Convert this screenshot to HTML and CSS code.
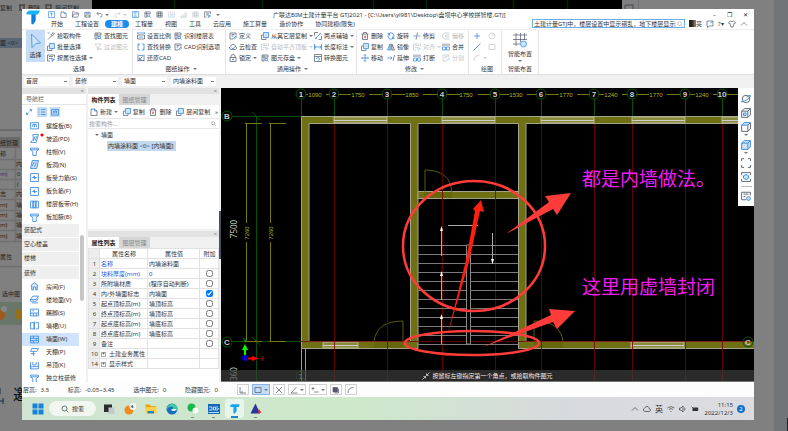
FILE: index.html
```
<!DOCTYPE html>
<html lang="zh-CN">
<head>
  <meta charset="UTF-8">
  <meta name="viewport" content="width=device-width, initial-scale=1">
  <title>广联达BIM土建计量平台 GTJ2021</title>
  <link rel="stylesheet" href="styles.css">
</head>
<body>

  <!-- icon set -->
  <svg class="defs" aria-hidden="true">
    <symbol id="new" viewBox="0 0 16 16"><path d="M2 5V15H14V6L9 2H5"/><path class="b" d="M9 2V6H14M1 3H5M3 1V5"/></symbol>
    <symbol id="plus" viewBox="0 0 16 16"><path class="b" d="M1 1H15V15H1ZM8 4V12M5 7L8 4L11 7"/></symbol>
    <symbol id="open" viewBox="0 0 16 16"><path d="M1 14V2H6L8 4H14V7M1 14L4 7H16L13 14Z"/></symbol>
    <symbol id="save" viewBox="0 0 16 16"><path d="M2 3H14V14H2ZM4 14V9H12V14"/><path class="b" d="M5 3V6H11V3"/></symbol>
    <symbol id="undo" viewBox="0 0 16 16"><path d="M5 2L2 6L6 9M2 6H10Q14 6 14 10T9 14"/></symbol>
    <symbol id="redo" viewBox="0 0 16 16"><path d="M11 2L14 6L10 9M14 6H6Q2 6 2 10T7 14"/></symbol>
    <symbol id="sum" viewBox="0 0 16 16"><path class="b" d="M1 1H15V15H1ZM11 4H5L9 8L5 12H11"/></symbol>
    <symbol id="find" viewBox="0 0 16 16"><path d="M6 14H2V2H14V7M2 6H14M6 2V14"/><path class="b" d="M8 9H13V13H8ZM13 13L15 15"/></symbol>
    <symbol id="grid" viewBox="0 0 16 16"><path d="M2 2H14V14H2ZM2 6H14M2 10H14M6 2V14M10 2V14"/></symbol>
    <symbol id="chart" viewBox="0 0 16 16"><path d="M1 14H15M3 14V10M7 14V7M11 14V4M14 14V2"/></symbol>
    <symbol id="pick" viewBox="0 0 16 16"><path d="M2 15L10 7M7 4L12 9M9 5L12 1L15 4L11 7"/><path class="b" d="M1 2H5"/></symbol>
    <symbol id="copy" viewBox="0 0 16 16"><path d="M4 6H1V15H10V12"/><path class="bf" d="M5 1H15V11H5Z"/></symbol>
    <symbol id="attr" viewBox="0 0 16 16"><path d="M15 7V2H1V14H6M4 5H12M4 9H7"/><path class="bf" d="M8 8L15 11L12 12L11 15Z"/></symbol>
    <symbol id="filter" viewBox="0 0 16 16"><path d="M2 2H14L9 8V14L6 12V8ZM11 10L15 14M15 10L11 14"/></symbol>
    <symbol id="scale" viewBox="0 0 16 16"><path d="M1 6H15V14H1Z"/><path class="b" d="M1 1V4M15 1V4M1 2H15M4 10H12"/></symbol>
    <symbol id="swap" viewBox="0 0 16 16"><path class="b" d="M6 2H2V14H6M10 2H14V14H10M4 5L2 2M12 11L14 14"/></symbol>
    <symbol id="restore" viewBox="0 0 16 16"><path d="M2 1V15M14 1V15M2 13H14"/><path class="b" d="M4 3H12M5 11L11 5M5 7V11H9"/></symbol>
    <symbol id="define" viewBox="0 0 16 16"><path d="M8 14H2V2H14V7M5 5H11M5 8H9"/><path class="b" d="M9 13L14 8L15 10L11 14Z"/></symbol>
    <symbol id="cloud" viewBox="0 0 16 16"><path d="M4 13Q0 12 1 8Q3 6 4 6Q6 1 10 3Q13 5 12 7Q16 8 15 11Q14 13 12 13Z"/></symbol>
    <symbol id="check" viewBox="0 0 16 16"><path d="M4 13Q0 12 1 8Q3 6 4 6Q6 1 10 3Q13 5 12 7Q16 8 15 11Q14 13 12 13Z"/><path class="b" d="M5 9L8 12L12 7"/></symbol>
    <symbol id="lock" viewBox="0 0 16 16"><path d="M4 7V4Q4 1 8 1T12 4V7M2 7H14V15H2Z"/><path class="b" d="M8 9V13M6 11H10"/></symbol>
    <symbol id="line" viewBox="0 0 16 16"><path class="b" d="M2 14L14 2M3 11L6 14M11 2L14 5"/><path d="M1 1V8M15 8V15H9M1 1H8"/></symbol>
    <symbol id="length" viewBox="0 0 16 16"><path class="b" d="M1 2V14M15 2V14M1 8H15M4 5L1 8L4 11M12 5L15 8L12 11"/></symbol>
    <symbol id="convert" viewBox="0 0 16 16"><path d="M1 1H15V15H1ZM1 5H15"/><path class="b" d="M5 10Q5 7 8 7T11 10T8 13"/></symbol>
    <symbol id="trash" viewBox="0 0 16 16"><path d="M1 4H15M5 4V1H11V4M3 4V15H13V4"/><path class="r" d="M6 7L10 12M10 7L6 12"/></symbol>
    <symbol id="rotate" viewBox="0 0 16 16"><path class="b" d="M4 3Q8 0 12 3Q16 8 12 13Q8 16 4 13Q0 8 4 3M1 3H5V7M15 13H11V9"/></symbol>
    <symbol id="trim" viewBox="0 0 16 16"><path class="b" d="M1 8H6M9 8H15"/><path d="M6 15L9 1"/></symbol>
    <symbol id="offset" viewBox="0 0 16 16"><path d="M15 2H6Q1 3 1 8T6 14H15M15 6H8Q5 8 8 10H15"/></symbol>
    <symbol id="mirror" viewBox="0 0 16 16"><path class="bf" d="M6 2V14H1Z"/><path d="M10 2V14H15ZM8 1V15"/></symbol>
    <symbol id="join" viewBox="0 0 16 16"><path d="M2 1V6M6 1V6M10 1V6M14 1V6"/><path class="b" d="M1 8H7V14H1ZM9 8H15V14H9Z"/></symbol>
    <symbol id="move" viewBox="0 0 16 16"><path class="b" d="M8 1V15M1 8H15M6 3L8 1L10 3M6 13L8 15L10 13M3 6L1 8L3 10M13 6L15 8L13 10"/></symbol>
    <symbol id="extend" viewBox="0 0 16 16"><path class="b" d="M1 8H10M7 5L10 8L7 11"/><path d="M12 14L15 2"/></symbol>
    <symbol id="cross" viewBox="0 0 16 16"><path class="b" d="M8 2V14M2 8H14"/></symbol>
    <symbol id="slash" viewBox="0 0 16 16"><path class="b" d="M3 13L13 3M1 15L4 12M12 4L15 1"/></symbol>
    <symbol id="expand" viewBox="0 0 16 16"><path class="b" d="M3 9V13H7M9 3H13V7M4 12L7 9M12 4L9 7"/></symbol>
    <symbol id="arc" viewBox="0 0 16 16"><path d="M2 14Q2 3 13 3"/></symbol>
    <symbol id="clock" viewBox="0 0 16 16"><circle cx="8" cy="8" r="6"/><path d="M8 8L12 5"/></symbol>
    <symbol id="rect" viewBox="0 0 16 16"><path d="M2 3H14V13H2Z"/></symbol>
    <symbol id="layout" viewBox="0 0 32 32"><path d="M2 6H30M2 15H30M2 24H16M8 2V28M17 2V20M25 2V16"/><circle class="bf" cx="23" cy="24" r="6"/></symbol>
    <symbol id="cursor" viewBox="0 0 24 32"><path class="bf" d="M3 2L21 20L12 21L4 29Z"/></symbol>
    <symbol id="search" viewBox="0 0 16 16"><circle cx="7" cy="7" r="5"/><path d="M11 11L15 15"/></symbol>
    <symbol id="box" viewBox="0 0 16 16"><path class="b" d="M1 3H15V14H1ZM5 11V6H11V11M8 6V11"/></symbol>
    <symbol id="ramp" viewBox="0 0 16 16"><path class="b" d="M5 1H15L11 15H1L6 9ZM9 4L6 12M12 4L9 12"/></symbol>
    <symbol id="cap" viewBox="0 0 16 16"><path class="b" d="M1 2H15V5L11 8V15H5V8L1 5ZM1 5H15"/></symbol>
    <symbol id="hole" viewBox="0 0 16 16"><path class="bf" d="M4 1H15L12 15H1ZM4 11L7 4M8 12L11 4"/></symbol>
    <symbol id="rebar" viewBox="0 0 16 16"><path class="b" d="M1 1H15V15H1ZM4 8H12M8 5V11M6 6L10 10"/></symbol>
    <symbol id="strip" viewBox="0 0 16 16"><path class="b" d="M1 2H15V14H1ZM5 2V14M11 2V14"/><path class="bf" d="M6 3H10V13H6Z"/></symbol>
    <symbol id="room" viewBox="0 0 16 16"><path class="bf" d="M1 7L8 1L15 7M3 6V14H6V9H10V14H13V6"/></symbol>
    <symbol id="floor" viewBox="0 0 16 16"><path class="b" d="M5 2H15L11 8H1ZM1 8V11H11L15 6M3 14H14"/></symbol>
    <symbol id="wall" viewBox="0 0 16 16"><path class="b" d="M1 2H15V14H1ZM1 6H15M1 10H15M6 2V6M11 6V10M6 10V14"/></symbol>
    <symbol id="skirt" viewBox="0 0 16 16"><path class="b" d="M1 2H15V14H1ZM1 9H15M6 9V14M11 9V14M4 5H7"/></symbol>
    <symbol id="dado" viewBox="0 0 16 16"><path class="b" d="M1 3H7V14H1ZM8 1V15M10 3H15V14H10"/></symbol>
    <symbol id="ceil" viewBox="0 0 16 16"><path class="b" d="M3 1H15L12 6H1ZM6 6V14M1 10H9"/></symbol>
    <symbol id="hang" viewBox="0 0 16 16"><path class="b" d="M1 2V14H15V2M1 14V10H15M5 2V7H11V2"/></symbol>
    <symbol id="orbit" viewBox="0 0 16 16"><circle cx="8" cy="8" r="6"/><path class="b" d="M1 11Q-1 14 6 11T15 4T9 5"/></symbol>
    <symbol id="cube" viewBox="0 0 16 16"><path d="M1 5L5 1H15V11L11 15H1ZM1 5H11V15M11 5L15 1"/></symbol>
    <symbol id="cube3d" viewBox="0 0 16 16"><path d="M1 5L5 1H15V11L11 15H1ZM1 5H11V15M11 5L15 1"/><path class="bf" d="M4 8H8V12H4Z"/></symbol>
    <symbol id="cubetop" viewBox="0 0 16 16"><path d="M1 5V15H11L15 11V1M11 5V15"/><path class="bf" d="M1 5L5 1H15L11 5Z"/></symbol>
    <symbol id="cubefill" viewBox="0 0 16 16"><path class="bf" d="M1 5L5 1H15V11L11 15H1ZM1 5H11V15M11 5L15 1"/></symbol>
    <symbol id="fit" viewBox="0 0 16 16"><path d="M1 5V1H5M11 1H15V5M15 11V15H11M5 15H1V11"/></symbol>
    <symbol id="eye" viewBox="0 0 16 16"><path d="M1 5V1H15V5M15 11V15H1V11"/><path class="bf" d="M4 6L8 4L12 6V10L8 12L4 10Z"/></symbol>
    <symbol id="note" viewBox="0 0 16 16"><path d="M8 14H1V2H15V7M4 5H12M4 9H7"/><circle class="bf" cx="12" cy="12" r="3"/></symbol>
    <symbol id="corner" viewBox="0 0 16 16"><path d="M2 2V14H14M6 10V14"/></symbol>
    <symbol id="xmark" viewBox="0 0 16 16"><path d="M2 2L14 14M14 2L2 14"/></symbol>
    <symbol id="angle" viewBox="0 0 16 16"><path d="M13 2L2 14H15"/></symbol>
    <symbol id="up" viewBox="0 0 16 16"><path d="M2 11L8 5L14 11"/></symbol>
    <symbol id="wifi" viewBox="0 0 16 16"><path d="M1 6Q8 0 15 6M4 9Q8 5 12 9M7 12L8 13L9 12"/></symbol>
    <symbol id="sound" viewBox="0 0 16 16"><path d="M1 6H4L8 2V14L4 10H1ZM11 5Q13 8 11 11"/></symbol>
    <symbol id="shirt" viewBox="0 0 16 16"><path d="M5 2L1 5L3 8L4 7L6 14H10L12 7L13 8L15 5L11 2Q8 5 5 2"/></symbol>
    <symbol id="chat" viewBox="0 0 16 16"><path d="M2 2H14V12H7L3 15V12H2Z"/><path class="b" d="M9 6L14 3"/></symbol>
  </svg>

  <!-- dimmed desktop behind the window -->
  <svg class="desktop" viewBox="0 0 788 431" preserveAspectRatio="xMinYMin slice" aria-hidden="true">
    <rect width="788" height="431" fill="#808080"/>
    <rect x="92" width="530" height="10" fill="#000"/>
    <path d="M174.500 0V9M262.500 0V9M373.500 0V9M426.500 0V9M513.500 0V9M567.500 0V9" stroke="#002800"/>
    <path d="M625 5H633V9M625 5V9" fill="none" stroke="#565a60"/>
    <rect x="638" width="1" height="9" fill="#707070"/>
    <rect x="774" width="14" height="431" fill="#71757a"/>
    <rect x="787" y="418" width="1" height="13" fill="#202428"/>
    <g class="ghost">
      <text x="0" y="10">复制</text><text x="28" y="10">删除</text><text x="55" y="10">层间复制</text>
      <path d="M19 5H25M20 5V10H24V5M46 5H51V9H46Z" fill="none" stroke="#444"/>
      <rect y="38" width="22" height="10" fill="#596673"/>
      <text x="0" y="45">面 &lt;0&gt;</text>
      <rect y="129" width="22" height="2" fill="#6c6c6c"/>
      <rect y="137" width="20" height="11" fill="#696969"/>
      <text x="0" y="145">纸管理</text>
      <path d="M0 159.500H22M0 169.500H22M0 179.500H22M0 189.500H22M0 199.500H22M0 210.500H22M0 220.500H22M0 230.500H22M0 241.500H22M0 266.500H22M15.500 148V241" stroke="#6f6f6f"/>
      <text x="0" y="156">称</text><text x="16" y="166">内</text><text class="key" x="0" y="176">m)</text><text x="17" y="176">0</text>
      <text x="17" y="186">(</text><text x="0" y="196">志</text><text x="16" y="196">内</text>
      <text x="0" y="207">m)</text><text x="16" y="207">墙</text><text x="0" y="217">m)</text><text x="16" y="217">墙</text>
      <text x="0" y="227">m)</text><text x="16" y="227">墙</text><text x="0" y="238">m)</text><text x="16" y="238">墙</text>
      <text x="0" y="259">属性</text><text x="2" y="296">选中图</text>
      <rect y="302" width="22" height="23" fill="#69776a"/>
      <circle cx="0" cy="315" r="5" fill="#a05a18"/><circle cx="4" cy="309" r="3" fill="#828888"/>
      <path d="M15 309H19L20 311H22V319H15Z" fill="#987017"/>
      <path d="M0 388V394M0 401H4M3 398V404" stroke="#3a4555"/>
      <text class="big" x="13" y="400">邀</text>
    </g>
  </svg>

  <main class="window">
    <header class="head">
      <svg class="logo" viewBox="0 0 30 30"><path fill="#16b3f5" d="M1 5L6 1H28L24 9H19V20L14 29L11 27V9H1Z"/><path fill="#0a7fdc" d="M11 9H19V22L14 29L11 27Z"/></svg>
      <div class="head-rows">
        <div class="titlebar">
          <div class="quick">
            <button aria-label="首页"><svg><use href="#plus"/></svg></button>
            <button aria-label="新建"><svg><use href="#new"/></svg></button>
            <button aria-label="打开"><svg><use href="#open"/></svg></button>
            <button aria-label="保存"><svg><use href="#save"/></svg></button>
            <button aria-label="撤销"><svg><use href="#undo"/></svg><i class="caret"></i></button>
            <button aria-label="重做" disabled><svg><use href="#redo"/></svg><i class="caret"></i></button>
            <button aria-label="汇总"><svg><use href="#sum"/></svg></button>
            <button aria-label="查找"><svg><use href="#find"/></svg></button>
            <button aria-label="表格"><svg><use href="#grid"/></svg></button>
            <button aria-label="构件" disabled><svg><use href="#join"/></svg></button>
            <button aria-label="统计" disabled><svg><use href="#chart"/></svg></button>
            <button aria-label="报表" disabled><svg><use href="#grid"/></svg></button>
            <button aria-label="导出"><svg><use href="#attr"/></svg></button>
            <i class="caret"></i>
          </div>
          <h1>广联达BIM土建计量平台 GTJ2021 - [C:\Users\yl981\Desktop\盘坝中心学校拼智楼.GTJ]</h1>
          <div class="win-controls">
            <button aria-label="最小化">–</button>
            <button aria-label="还原">❐</button>
            <button aria-label="关闭">✕</button>
          </div>
        </div>
        <div class="tabbar">
          <nav class="tabs">
            <a href="#">开始</a><a href="#">工程设置</a><a href="#" class="active">建模</a><a href="#">工程量</a><a href="#">视图</a><a href="#">工具</a><a href="#">云应用</a><a href="#">施工算量</a><a href="#">造价协作</a><a href="#">协同建模(限免)</a>
          </nav>
          <label class="help">
            <input type="text" aria-label="搜索" value="土建计量GTJ中，楼层设置中显示错乱，地下楼层显示如">
            <svg><use href="#search"/></svg>
          </label>
          <div class="account">
            <span class="avatar"></span>亮
            <button aria-label="消息"><svg><use href="#chat"/></svg></button>
            <button aria-label="帮助">?▾</button>
            <button aria-label="皮肤"><svg><use href="#shirt"/></svg></button>
            <button aria-label="收起"><svg><use href="#up"/></svg></button>
          </div>
        </div>
      </div>
    </header>

    <section class="ribbon">
      <div class="group select">
        <button class="large on"><svg><use href="#cursor"/></svg>选择</button>
        <div class="cmds">
          <button><svg><use href="#pick"/></svg>拾取构件</button>
          <button><svg><use href="#find"/></svg>查找图元</button>
          <button><svg><use href="#copy"/></svg>批量选择</button>
          <button disabled><svg><use href="#filter"/></svg>过滤图元</button>
          <button><svg><use href="#attr"/></svg>按属性选择<i class="caret"></i></button>
        </div>
        <h2>选择</h2>
      </div>
      <div class="group drawing">
        <div class="cmds">
          <button><svg><use href="#scale"/></svg>设置比例</button>
          <button><svg><use href="#find"/></svg>识别楼层表</button>
          <button><svg><use href="#swap"/></svg>查找替换</button>
          <button><svg><use href="#define"/></svg>CAD识别选项</button>
          <button><svg><use href="#restore"/></svg>还原CAD</button>
        </div>
        <h2>图纸操作<i class="caret"></i></h2>
      </div>
      <div class="group common">
        <div class="cmds">
          <button><svg><use href="#define"/></svg>定义</button>
          <button><svg><use href="#copy"/></svg>从其它层复制<i class="caret"></i></button>
          <button><svg><use href="#line"/></svg>两点辅轴<i class="caret"></i></button>
          <button><svg><use href="#check"/></svg>云检查</button>
          <button disabled><svg><use href="#attr"/></svg>自动平齐顶板<i class="caret"></i></button>
          <button><svg><use href="#length"/></svg>长度标注<i class="caret"></i></button>
          <button><svg><use href="#lock"/></svg>锁定<i class="caret"></i></button>
          <button><svg><use href="#find"/></svg>图元存盘<i class="caret"></i></button>
          <button><svg><use href="#convert"/></svg>转换图元</button>
        </div>
        <h2>通用操作<i class="caret"></i></h2>
      </div>
      <div class="group modify">
        <div class="cmds">
          <button><svg><use href="#trash"/></svg>删除</button>
          <button><svg><use href="#rotate"/></svg>旋转</button>
          <button><svg><use href="#trim"/></svg>修剪</button>
          <button disabled><svg><use href="#offset"/></svg>偏移</button>
          <button><svg><use href="#copy"/></svg>复制</button>
          <button><svg><use href="#mirror"/></svg>镜像</button>
          <button disabled><svg><use href="#attr"/></svg>对齐<i class="caret"></i></button>
          <button><svg><use href="#join"/></svg>合并</button>
          <button><svg><use href="#move"/></svg>移动</button>
          <button><svg><use href="#extend"/></svg>延伸</button>
          <button><svg><use href="#join"/></svg>打断</button>
          <button disabled><svg><use href="#define"/></svg>分割</button>
        </div>
        <h2>修改<i class="caret"></i></h2>
      </div>
      <div class="group draw">
        <div class="cmds">
          <button aria-label="点"><svg><use href="#cross"/></svg></button>
          <button aria-label="圆" disabled><svg><use href="#clock"/></svg></button>
          <button aria-label="直线"><svg><use href="#slash"/></svg></button>
          <button aria-label="矩形" disabled><svg><use href="#rect"/></svg></button>
          <button aria-label="弧" disabled><svg><use href="#arc"/></svg><i class="caret"></i></button>
        </div>
        <h2>绘图</h2>
      </div>
      <div class="group smart">
        <button class="large"><svg><use href="#layout"/></svg>智能布置<i class="caret"></i></button>
        <h2>智能布置</h2>
      </div>
    </section>

    <div class="filters">
      <select aria-label="楼层"><option>首层</option></select>
      <select aria-label="类别"><option>装修</option></select>
      <select aria-label="类型"><option>墙面</option></select>
      <select aria-label="构件"><option>内墙涂料面</option></select>
    </div>

    <div class="work">
      <aside class="nav">
        <div class="strip"><button aria-label="关闭">×</button></div>
        <h3>导航栏</h3>
        <div class="nav-tools">
          <button aria-label="展开"><svg><use href="#expand"/></svg></button>
          <button class="on" aria-label="列表"><svg viewBox="0 0 16 16"><path class="b" d="M1 3H3M6 3H15M1 8H3M6 8H15M1 13H3M6 13H15"/></svg></button>
          <button class="on" aria-label="图标"><svg><use href="#box"/></svg></button>
        </div>
        <div class="nav-body">
          <ul>
            <li><svg><use href="#box"/></svg>螺旋板(B)</li>
            <li class="hot"><svg><use href="#ramp"/></svg>坡道(PD)</li>
            <li><svg><use href="#cap"/></svg>柱帽(V)</li>
            <li><svg><use href="#hole"/></svg>板洞(N)</li>
            <li><svg><use href="#rebar"/></svg>板受力筋(S)</li>
            <li><svg><use href="#rebar"/></svg>板负筋(F)</li>
            <li><svg><use href="#strip"/></svg>楼层板带(H)</li>
            <li><svg><use href="#cap"/></svg>板加腋(B)</li>
            <li class="cat">装配式</li>
            <li class="cat">空心楼盖</li>
            <li class="cat">楼梯</li>
            <li class="cat">装修</li>
            <li><svg><use href="#room"/></svg>房间(F)</li>
            <li><svg><use href="#floor"/></svg>楼地面(V)</li>
            <li><svg><use href="#skirt"/></svg>踢脚(S)</li>
            <li><svg><use href="#dado"/></svg>墙裙(U)</li>
            <li class="sel"><svg><use href="#wall"/></svg>墙面(W)</li>
            <li><svg><use href="#ceil"/></svg>天棚(P)</li>
            <li><svg><use href="#hang"/></svg>吊顶(K)</li>
            <li><svg><use href="#cap"/></svg>独立柱装修</li>
          </ul>
          <div class="scroll"><span></span></div>
        </div>
      </aside>

      <div class="panels">
        <section class="panel list">
          <div class="strip"><button aria-label="关闭">×</button></div>
          <div class="panel-tabs"><button class="active">构件列表</button><button>图纸管理</button></div>
          <div class="tools">
            <button><svg><use href="#new"/></svg>新建<i class="caret"></i></button>
            <button><svg><use href="#copy"/></svg>复制</button>
            <button><svg><use href="#trash"/></svg>删除</button>
            <button><svg><use href="#copy"/></svg>层间复制</button>
            <button aria-label="更多">»</button>
          </div>
          <label class="search"><input type="text" aria-label="搜索构件" placeholder="搜索构件..."><svg><use href="#search"/></svg></label>
          <div class="tree">
            <p><i class="caret"></i>墙面</p>
            <p class="leaf">内墙涂料面 &lt;0&gt; [内墙面]</p>
          </div>
        </section>

        <section class="panel props">
          <div class="strip"><button aria-label="关闭">×</button></div>
          <div class="panel-tabs"><button class="active">属性列表</button><button>图层管理</button></div>
          <table>
            <colgroup><col class="c-no"><col class="c-name"><col class="c-val"><col></colgroup>
            <tr><th></th><th>属性名称</th><th>属性值</th><th>附加</th></tr>
            <tr><td>1</td><td class="key">名称</td><td>内墙涂料面</td><td></td></tr>
            <tr><td>2</td><td class="key">块料厚度(mm)</td><td>0</td><td><input type="checkbox" aria-label="块料厚度"></td></tr>
            <tr><td>3</td><td>所附墙材质</td><td>(程序自动判断)</td><td><input type="checkbox" aria-label="所附墙材质"></td></tr>
            <tr><td>4</td><td>内/外墙面标志</td><td>内墙面</td><td><input type="checkbox" aria-label="内/外墙面标志" checked></td></tr>
            <tr><td>5</td><td>起点顶标高(m)</td><td>墙顶标高</td><td><input type="checkbox" aria-label="起点顶标高"></td></tr>
            <tr><td>6</td><td>终点顶标高(m)</td><td>墙顶标高</td><td><input type="checkbox" aria-label="终点顶标高"></td></tr>
            <tr><td>7</td><td>起点底标高(m)</td><td>墙底标高</td><td><input type="checkbox" aria-label="起点底标高"></td></tr>
            <tr><td>8</td><td>终点底标高(m)</td><td>墙底标高</td><td><input type="checkbox" aria-label="终点底标高"></td></tr>
            <tr><td>9</td><td>备注</td><td></td><td><input type="checkbox" aria-label="备注"></td></tr>
            <tr><td>10</td><td><span class="expand">+</span>土建业务属性</td><td></td><td></td></tr>
            <tr><td>14</td><td><span class="expand">+</span>显示样式</td><td></td><td></td></tr>
          </table>
        </section>
      </div>

      <div class="splitter"><span></span></div>

      <div class="canvas">
        <svg class="plan" viewBox="221 88 533 294" role="img" aria-label="平面图">
          <!-- axes -->
          <path class="axis" d="M232 116.500H301M232 341.500H301M256.500 116V382M252 112L260 120M252 337L260 345M301.500 99V116M334.500 99V116M387.500 99V116M442.500 99V116M495.500 99V116M541.500 99V116M594.500 99V116M632.500 99V116M685.500 99V116M722.500 99V116"/>
          <path class="dim" d="M306 94.500H308M326 94.500H330M338 94.500H351M369 94.500H383M391 94.500H405M423 94.500H438M446 94.500H460M478 94.500H491M499 94.500H509M527 94.500H537M545 94.500H559M577 94.500H590M598 94.500H604M622 94.500H628M636 94.500H649M667 94.500H681M689 94.500H695M713 94.500H718M726 94.500H738"/>
          <g class="bubble">
            <circle cx="301" cy="94" r="5"/><circle cx="334" cy="94" r="5"/><circle cx="387" cy="94" r="5"/><circle cx="442" cy="94" r="5"/><circle cx="495" cy="94" r="5"/><circle cx="541" cy="94" r="5"/><circle cx="594" cy="94" r="5"/><circle cx="632" cy="94" r="5"/><circle cx="685" cy="94" r="5"/><circle cx="722" cy="94" r="5"/>
            <circle cx="227" cy="116" r="5"/><circle cx="227" cy="342" r="5"/><circle cx="301" cy="376" r="5"/>
          </g>
          <g class="axis-no">
            <text x="301" y="97">1</text><text x="334" y="97">2</text><text x="387" y="97">3</text><text x="442" y="97">4</text><text x="495" y="97">5</text><text x="541" y="97">6</text><text x="594" y="97">7</text><text x="632" y="97">8</text><text x="685" y="97">9</text><text x="722" y="97">10</text>
            <text x="227" y="119">B</text><text x="227" y="345">C</text><text x="301" y="379">1</text>
          </g>
          <g class="dim-no">
            <text x="315" y="97">1090</text><text x="358" y="97">1750</text><text x="412" y="97">1850</text><text x="466" y="97">1750</text><text x="516" y="97">1530</text><text x="566" y="97">1770</text><text x="611" y="97">1240</text><text x="656" y="97">1770</text><text x="702" y="97">1240</text>
            <text transform="translate(249 233) rotate(-90)">7260</text>
            <text transform="translate(273 233) rotate(-90)">7260</text>
          </g>
          <g class="span-no">
            <text transform="translate(237 229) rotate(-90)">7500</text>
            <text transform="translate(237 374) rotate(-90)">360</text>
          </g>
          <path class="dim" d="M246.500 123V223M246.500 242V341M270.500 123V223M270.500 242V341M245 123.500H262M269 123.500H286M245 341.500H262M269 341.500H286"/>
          <path stroke="#999" d="M301.500 349V382M305.500 349V382"/>

          <!-- walls -->
          <path class="wall" d="M301.500 116.500H756V123.500H526V341.500H756V348.500H518.500V123.500H418V348.500H301.500ZM309 123.500H410.500V341.500H309Z"/>
          <path class="wall" d="M418 191.500H518.500V198.500H418Z"/>
          <path class="glass" d="M334 117H387V123H334ZM442 117H495V123H442ZM541 117H594V123H541ZM632 117H685V123H632ZM722 117H756V123H722ZM323 342H358V348H323ZM631 342H684V348H631Z"/>
          <path stroke="#ccc" d="M334 120.500H387M442 120.500H495M541 120.500H594M632 120.500H685M722 120.500H756M323 345.500H358M631 345.500H684"/>
          <path fill="#66660a" d="M424 192H452V198H424ZM374 342H403V348H374ZM534 342H563V348H534Z"/>
          <path class="door" d="M452 192Q450 170 425 170V192M374 341Q377 321 403 321V341M563 341Q560 321 534 321V341"/>
          <path class="redline" d="M334.500 124V382M387.500 124V382M442.500 124V382M495.500 124V382M541.500 124V382M594.500 124V382M632.500 124V382M685.500 124V382M722.500 124V382M301 341.500H756"/>

          <!-- stairs -->
          <path class="stair" d="M418 245.500H518M418 254.500H518M418 263.500H518M418 272.500H518M418 281.500H518M418 290.500H518M418 299.500H518M418 308.500H518M418 317.500H518M418 326.500H518M418 335.500H518M418 344.500H518"/>
          <path fill="#000" stroke="#888" d="M466.500 245V344H470.500V245Z"/>
          <path stroke="#aaa" d="M441.500 228V256M441.500 273V300M441.500 316V344M492.500 233V264M448 225.500H478"/>
          <path fill="#fff" d="M441.500 226L443 231H440ZM441.500 271L443 276H440ZM441.500 314L443 319H440ZM492.500 264L491 259H494Z"/>

          <!-- origin marker -->
          <path stroke="#0f0" stroke-width="2" d="M245 358V349"/><path fill="#0f0" d="M245 344L248 350H242Z"/>
          <path stroke="#f00" stroke-width="2" d="M245 358.500H254"/><path fill="#f00" d="M259 358.500L252 361V356Z"/>
          <circle cx="245" cy="358" r="3" fill="#00c"/>
          <text class="mark" x="260" y="361" fill="#d00">X</text><text class="mark" x="243" y="343" fill="#0b0">Y</text>
          <g class="bubble"><circle cx="748" cy="342" r="5"/></g><g class="axis-no"><text x="748" y="345">C</text></g>

          <!-- remarks -->
          <g class="pen"><ellipse cx="474" cy="246" rx="71" ry="65"/><ellipse cx="472" cy="343" rx="67" ry="12"/></g>
          <path fill="#ff1e10" d="M447 337L466 260L475 211L473 209L481 200L484 212L480 211L469 262Z"/>
          <path fill="#ff3c3a" d="M506 234L549 202L545 196L571 193L557 215L553 209Z"/>
          <path fill="#ff3c3a" d="M483 347L551 315L549 309L575 311L557 329L553 322Z"/>
          <g class="remark"><text x="582" y="186">都是内墙做法。</text><text x="582" y="294">这里用虚墙封闭</text></g>
        </svg>

        <div class="view-tools">
          <button aria-label="动态观察"><svg><use href="#orbit"/></svg></button>
          <button aria-label="三维"><svg><use href="#cube3d"/></svg></button>
          <button aria-label="俯视"><svg><use href="#cubetop"/></svg><i class="caret"></i></button>
          <button aria-label="实体"><svg><use href="#cubefill"/></svg><i class="caret"></i></button>
          <button aria-label="全屏"><svg><use href="#fit"/></svg></button>
          <button aria-label="显示"><svg><use href="#eye"/></svg></button>
          <hr>
          <button aria-label="设置"><svg><use href="#note"/></svg></button>
        </div>
        <p class="hint"><svg viewBox="0 0 16 16"><path d="M1 15L7 9M3 9H7V13M15 1L9 7M9 3V7H13"/></svg>按鼠标左键指定第一个角点，或拾取构件图元</p>
      </div>
    </div>

    <footer class="status">
      <dl>
        <div><dt>层高:</dt><dd>3.5</dd></div>
        <div><dt>标高:</dt><dd>-0.05~3.45</dd></div>
        <div><dt>选中图元:</dt><dd>0</dd></div>
        <div><dt>隐藏图元:</dt><dd>0</dd></div>
      </dl>
      <div class="snap">
        <button aria-label="正交"><svg><use href="#corner"/></svg></button>
        <button class="on" aria-label="捕捉"><svg><use href="#rect"/></svg><i class="caret"></i></button>
        <button aria-label="交点"><svg><use href="#xmark"/></svg></button>
        <button aria-label="角度"><svg><use href="#angle"/></svg><i class="caret"></i></button>
        <button aria-label="坐标"><svg viewBox="0 0 16 16"><path d="M1 5H7M4 2V8M6 12H15"/></svg><i class="caret"></i></button>
        <button aria-label="填充"><svg viewBox="0 0 16 16"><path fill="#556" d="M2 3H11V12H2Z"/><path d="M13 5V14H5"/></svg></button>
        <button aria-label="圆弧"><svg><use href="#arc"/></svg></button>
      </div>
    </footer>

    <div class="taskbar">
      <button aria-label="开始"><svg viewBox="0 0 24 24"><path fill="#1683d8" d="M1 1H11V11H1ZM13 1H23V11H13ZM1 13H11V23H1ZM13 13H23V23H13Z"/></svg></button>
      <button class="find"><svg class="small"><use href="#search"/></svg>搜索</button>
      <button aria-label="任务视图"><svg viewBox="0 0 24 24"><path fill="#c4c8c8" d="M10 9H23V22H10Z"/><path fill="#2b2b2b" d="M2 3H18V9H11V18H2Z"/></svg></button>
      <button aria-label="天气"><svg class="flat" viewBox="0 0 24 24"><circle cx="10" cy="14" r="9" fill="#f08a18"/><circle cx="18" cy="7" r="7" fill="#f3f5f5"/><path d="M17 10V4L14 8H19" stroke="#555"/></svg></button>
      <button aria-label="文件"><svg viewBox="0 0 24 24"><path fill="#e9a414" d="M1 3H9L12 6H22V12H1Z"/><path fill="#fcd04a" d="M1 8H23V21H1Z"/><path fill="#2585cc" d="M5 16H18V21H5Z"/></svg></button>
      <button aria-label="浏览器"><svg class="flat" viewBox="0 0 24 24"><circle cx="12" cy="12" r="11" fill="#1372c0"/><path fill="#42c8a0" d="M2 9Q8-2 18 3Q25 9 22 15H13Q17 7 10 7Q5 7 2 12Z"/><path fill="#e8f5f5" d="M11 12H21Q20 16 15 16Q10 16 11 12"/></svg></button>
      <button class="running" aria-label="微信"><svg class="flat" viewBox="0 0 24 24"><circle cx="9" cy="9" r="8" fill="#18b850"/><circle cx="17" cy="15" r="6" fill="#f5fff5"/></svg></button>
      <button class="running" aria-label="看图"><svg viewBox="0 0 24 24"><path fill="#1567b8" d="M0 2H24V22H0Z"/><path stroke="#b8dcff" stroke-width="2" d="M2 8H8V14H2M11 8H15V14H11ZM18 6V15L22 10M1 19H22"/></svg></button>
      <button class="running current" aria-label="算量"><svg viewBox="0 0 30 30"><path fill="#16a5f0" d="M3 6L7 3H27L24 10H19V20L14 27L11 25V10H3Z"/></svg></button>
      <button class="running" aria-label="制图"><svg viewBox="0 0 24 24"><path fill="#23389a" d="M11 1L20 21H1Z"/><path fill="#d83040" d="M17 11L23 19L16 21Z"/></svg></button>
      <div class="tray">
        <svg><use href="#up"/></svg><svg><use href="#cloud"/></svg><b>英</b><svg><use href="#wifi"/></svg><svg><use href="#sound"/></svg>
        <svg viewBox="0 0 16 16"><path fill="#333" d="M3 5H14V12H3Z"/><path d="M1 3L5 7M16 7V10"/></svg>
        <time>11:15<br>2022/12/3</time>
        <span class="count">2</span>
      </div>
    </div>
  </main>
</body>
</html>
```
FILE: styles.css
```
* {
  box-sizing: border-box;
}
body {
  margin: 0;
  padding: 9px 34px 11px 22px;
  background: #808080;
  font: 6px/8px "Noto Sans", "Noto Sans CJK SC", sans-serif;
  color: #333;
}
h1, h2, h3, p, ul, dl, dd {
  margin: 0;
  padding: 0;
  font-size: 6px;
  font-weight: normal;
}
button, input, select {
  margin: 0;
  padding: 0;
  border: 0;
  background: none;
  font: inherit;
  color: inherit;
}
button {
  display: flex;
  align-items: center;
  gap: 2px;
  white-space: nowrap;
}
button:disabled {
  opacity: 0.35;
}
a {
  color: inherit;
  text-decoration: none;
}

/* icons */
svg {
  width: 8px;
  height: 8px;
  flex: none;
  fill: none;
  stroke: #59626e;
  stroke-width: 1.5;
}
.b {
  stroke: #3487e0;
}
.bf {
  stroke: #3487e0;
  fill: #cfe4fb;
}
.r {
  stroke: #e03c3c;
}
.defs {
  position: absolute;
  width: 0;
  height: 0;
}
.logo path, .taskbar svg path[fill], .flat circle {
  stroke: none;
}
.caret {
  border: 2px solid transparent;
  border-top-color: #777;
  border-bottom: 0;
  flex: none;
}

/* backdrop */
.desktop {
  position: absolute;
  inset: 0;
  width: 100%;
  height: 100%;
  z-index: -1;
  stroke: none;
}
.ghost text {
  fill: #222;
}
.ghost .key {
  fill: #1e2f78;
}
.ghost .big {
  font-size: 15px;
  fill: #000;
}

.window {
  display: flex;
  flex-direction: column;
  background: #fff;
}

/* title and tabs */
.head {
  display: flex;
  height: 20px;
  padding: 1px 2px 0 4px;
}
.logo {
  width: 15px;
  height: 15px;
}
.head-rows {
  flex: 1;
  padding-left: 7px;
}
.titlebar, .tabbar {
  display: flex;
  align-items: center;
  height: 9px;
}
.quick {
  display: flex;
  align-items: center;
  gap: 5px;
  width: 225px;
}
.quick svg {
  width: 7px;
  height: 7px;
}
.titlebar h1 {
  flex: 1;
  white-space: nowrap;
}
.win-controls {
  display: flex;
  gap: 11px;
  padding-right: 4px;
}
.tabbar {
  padding-left: 3px;
}
.tabs {
  display: flex;
  gap: 12px;
  flex: 1;
  white-space: nowrap;
}
.tabs .active {
  margin: 0 -6px;
  padding: 0 6px;
  border-radius: 4px;
  background: #1a8cf0;
  color: #fff;
  font-weight: bold;
}
.help {
  display: flex;
  align-items: center;
  width: 153px;
  height: 9px;
  margin-right: 4px;
  border: 1px solid #68aee8;
  background: #fff;
}
.help input {
  flex: 1;
  min-width: 0;
  height: 7px;
  padding-left: 1px;
}
.help svg {
  width: 6px;
  height: 6px;
  margin: 0 1px;
  opacity: 0.6;
}
.account {
  display: flex;
  align-items: center;
  gap: 4px;
  width: 63px;
}
.avatar {
  width: 7px;
  height: 7px;
  margin-right: -4px;
  background: linear-gradient(90deg, #222 40%, #a08878);
}

/* ribbon */
.ribbon {
  display: flex;
  height: 46px;
  border-top: 1px solid #eee;
  border-bottom: 1px solid #ddd;
}
.group {
  display: grid;
  grid-template-columns: auto 1fr;
  grid-template-rows: 33px 11px;
  border-right: 1px solid #e4e4e4;
}
.group h2 {
  grid-column: 1 / -1;
  display: flex;
  align-items: center;
  justify-content: center;
  gap: 3px;
  white-space: nowrap;
}
.cmds {
  grid-column: 2;
  display: grid;
  grid-auto-rows: 11px;
}
.large {
  flex-direction: column;
  justify-content: center;
  gap: 2px;
}
.on {
  background: #c4dcf6;
}
.select {
  width: 111px;
  padding-left: 4px;
}
.select .large {
  width: 19px;
  height: 32px;
}
.select .large svg {
  width: 12px;
  height: 16px;
}
.select .cmds {
  grid-template-columns: 47px auto;
  padding-left: 2px;
}
.drawing {
  width: 93px;
  padding-left: 4px;
}
.drawing .cmds {
  grid-template-columns: 37px auto;
}
.common {
  width: 131px;
  padding-left: 3px;
}
.common .cmds {
  grid-template-columns: 32px 53px auto;
}
.modify {
  width: 112px;
  padding-left: 4px;
}
.modify .cmds {
  grid-template-columns: 26px 26px 29px auto;
}
.draw {
  width: 33px;
  padding-left: 4px;
}
.draw .cmds {
  grid-template-columns: 15px auto;
}
.smart {
  width: 37px;
}
.smart .large {
  grid-column: 1 / -1;
}
.smart .large svg {
  width: 16px;
  height: 16px;
}

.filters {
  display: flex;
  gap: 4px;
  padding: 2px;
  background: #f0f0f0;
}
.filters select {
  width: 45px;
  height: 9px;
  padding: 0 3px 0 2px;
  appearance: none;
  background: #fff linear-gradient(#777, #777) 40px 4px / 3px 1px no-repeat;
  line-height: 9px;
}

/* work area */
.work {
  display: flex;
  background: #f0f0f0;
}
.strip {
  display: flex;
  justify-content: flex-end;
  height: 6px;
  padding-right: 2px;
  background: #e2e2e2;
  line-height: 6px;
  color: #888;
}
.nav {
  display: flex;
  flex-direction: column;
  width: 64px;
  background: #fff;
  overflow: hidden;
}
.nav h3 {
  padding: 1px 4px;
  border-bottom: 1px solid #e4e4e4;
  color: #666;
}
.nav-tools {
  display: flex;
  align-items: center;
  gap: 3px;
  height: 14px;
  padding-left: 2px;
}
.nav-tools button {
  justify-content: center;
  width: 10px;
  height: 10px;
}
.nav-body {
  display: flex;
  flex: 1 0 0;
  min-height: 0;
  margin-bottom: -3px;
}
.nav ul {
  display: flex;
  flex-direction: column;
  width: 57px;
  list-style: none;
}
.nav li {
  display: flex;
  align-items: center;
  flex: 1 0 0;
  min-height: 0;
  gap: 7px;
  padding-left: 8px;
  white-space: nowrap;
}
.nav li svg {
  width: 9px;
  height: 9px;
}
.nav .cat {
  margin-bottom: 1px;
  padding-left: 2px;
  background: #efefef;
}
.nav .sel {
  background: #cfe4fc;
}
.hot {
  background: radial-gradient(circle at 20px 3px, #f00 1px, transparent 2px);
}
.scroll {
  width: 6px;
  padding: 116px 1px 0;
}
.scroll span {
  display: block;
  height: 66px;
  border-radius: 2px;
  background: #c6c6c6;
}

.panels {
  display: flex;
  flex-direction: column;
  gap: 2px;
  width: 133px;
  padding-left: 2px;
}
.panel {
  background: #fff;
}
.props {
  flex: 1;
}
.panel-tabs {
  display: flex;
  height: 11px;
  background: #f0f0f0;
}
.panel-tabs button {
  justify-content: center;
  width: 31px;
  background: #d6d6d6;
  color: #888;
}
.panel-tabs .active {
  background: #fff;
  color: #222;
  font-weight: bold;
}
.tools {
  display: flex;
  align-items: center;
  justify-content: space-between;
  height: 13px;
  padding: 0 1px 0 2px;
}
.search {
  display: flex;
  align-items: center;
  height: 11px;
  padding: 0 3px 0 1px;
  border-top: 1px solid #e8e8e8;
  border-bottom: 1px solid #e8e8e8;
}
.search input {
  flex: 1;
  min-width: 0;
  height: 9px;
}
.search input::placeholder {
  color: #999;
}
.search svg {
  width: 5px;
  height: 5px;
}
.tree {
  height: 100px;
  padding: 1px 7px;
}
.tree p {
  display: flex;
  align-items: center;
  gap: 2px;
  height: 10px;
}
.tree .leaf {
  width: 69px;
  margin: 1px 0 0 12px;
  padding-left: 1px;
  background: #c3d8ef;
  white-space: nowrap;
}

table {
  width: 100%;
  table-layout: fixed;
  border-collapse: collapse;
}
.c-no { width: 11px; }
.c-name { width: 48px; }
.c-val { width: 52px; }
th, td {
  height: 10px;
  padding: 0 0 0 1px;
  border: 1px solid #e2e2e2;
  font-weight: normal;
  white-space: nowrap;
}
td:first-child, th:first-child {
  background: #ededed;
  text-align: center;
}
td:last-child {
  text-align: center;
}
.key {
  color: #2458e8;
}
td input {
  display: block;
  width: 7px;
  height: 7px;
  margin: 0 auto;
}
.expand {
  display: inline-block;
  width: 5px;
  height: 5px;
  margin-right: 3px;
  border: 1px solid #aaa;
  font-size: 5px;
  line-height: 3px;
  text-align: center;
}
.splitter {
  width: 2px;
  padding-top: 123px;
}
.splitter span {
  display: block;
  height: 48px;
  background: #44525f;
}

/* drawing area */
.canvas {
  position: relative;
  flex: 1;
  min-width: 0;
  background: #000;
}
.plan {
  display: block;
  width: 100%;
  height: auto;
  stroke: none;
  stroke-width: 1;
}
.axis {
  stroke: #064f06;
}
.dim {
  stroke: #77770b;
}
.bubble {
  stroke: #075407;
}
.axis-no text {
  fill: #ccc;
  font: bold 8px "Liberation Sans", sans-serif;
  text-anchor: middle;
}
.dim-no text {
  fill: #b5b51c;
  font: 6px "Liberation Sans", sans-serif;
  text-anchor: middle;
}
.span-no text {
  fill: #ccc;
  font: 8px "Noto Sans", sans-serif;
  text-anchor: middle;
}
.wall {
  fill: #6f6f14;
  fill-rule: evenodd;
  stroke: #a5a58c;
}
.glass {
  fill: #8b8b3c;
  stroke: #b8b894;
}
.door {
  stroke: #5a5a08;
}
.redline {
  stroke: #780000;
  stroke-opacity: 0.8;
}
.stair {
  stroke: #7c7c7c;
}
.mark {
  font-size: 7px;
}
.pen {
  stroke: #ff3c3a;
  stroke-width: 2.5;
}
.remark text {
  fill: #f41cf4;
  font: 19px "Noto Sans CJK SC", sans-serif;
}
.view-tools {
  position: absolute;
  top: 0;
  right: 0;
  display: flex;
  flex-direction: column;
  align-items: center;
  gap: 4px;
  width: 16px;
  padding: 6px 0 5px;
  background: #fff;
}
.view-tools button {
  flex-direction: column;
  gap: 2px;
}
.view-tools svg {
  width: 10px;
  height: 10px;
}
.view-tools hr {
  width: 11px;
  margin: 0;
  border: 0;
  border-top: 1px solid #bbb;
}
.hint {
  position: absolute;
  right: 0;
  bottom: 0;
  left: 0;
  display: flex;
  align-items: center;
  justify-content: center;
  gap: 2px;
  height: 12px;
  border-bottom: 1px solid #777;
  background: rgba(64, 64, 64, 0.65);
  color: #eee;
}
.hint svg {
  stroke: #ddd;
}

/* status bar */
.status {
  display: flex;
  align-items: center;
  height: 15px;
  background: #fdfdfd;
}
.status dl {
  display: flex;
  justify-content: space-between;
  width: 196px;
  padding-left: 1px;
  white-space: nowrap;
}
.status dl div {
  display: flex;
  gap: 4px;
}
.snap {
  display: flex;
  gap: 3px;
  padding-left: 19px;
}
.snap button {
  justify-content: center;
  min-width: 11px;
  height: 11px;
  padding: 0 1px;
  border: 1px solid #d0d0d0;
}
.snap .on {
  border-color: #8ab4e8;
}

/* taskbar */
.taskbar {
  display: flex;
  align-items: center;
  gap: 2px;
  height: 23px;
  padding-left: 6px;
  background: linear-gradient(90deg, #d0e4d2, #cde8ca 45%, #d8dade 75%, #dcdce0);
}
.taskbar button {
  justify-content: center;
  width: 19px;
  height: 19px;
}
.taskbar svg {
  width: 12px;
  height: 12px;
}
.taskbar .find {
  width: 47px;
  height: 15px;
  margin-right: 1px;
  border-radius: 8px;
  background: #f0f6f0;
  gap: 3px;
}
.taskbar .small, .taskbar .tray svg {
  width: 8px;
  height: 8px;
  stroke: #444;
}
.running {
  background: linear-gradient(#888, #888) center bottom / 3px 1px no-repeat;
}
.current {
  border-radius: 3px;
  background: linear-gradient(#1b86d0, #1b86d0) center bottom / 7px 2px no-repeat, #e9f5ec;
}
.tray {
  display: flex;
  align-items: center;
  gap: 4px;
  margin-left: auto;
  padding-right: 9px;
}
.tray b {
  font-size: 8px;
  font-weight: normal;
}
.tray time {
  width: 30px;
  text-align: right;
}
.count {
  width: 8px;
  height: 8px;
  border-radius: 4px;
  background: #0d72cc;
  color: #fff;
  text-align: center;
}
```
